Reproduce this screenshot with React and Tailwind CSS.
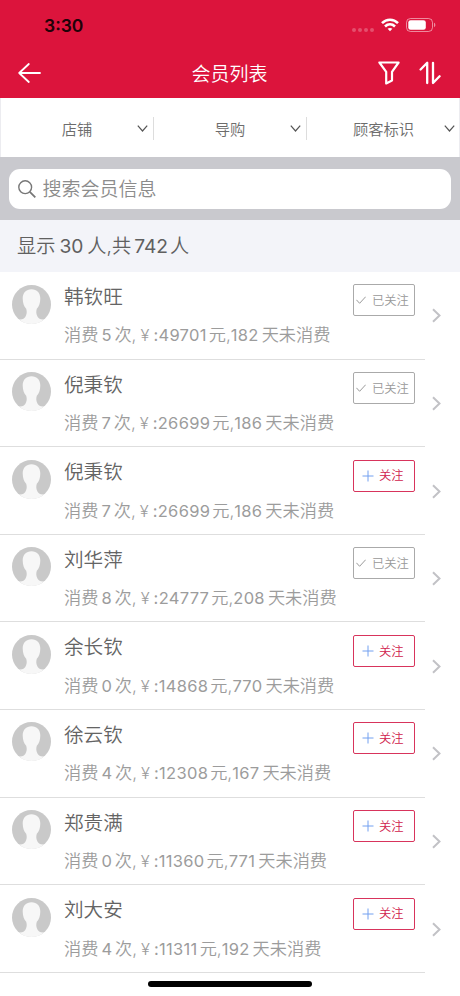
import { useState } from "react";
import clsx from "clsx";

const MEMBERS = [
    { id: 1, name: "韩钦旺", times: 5, amount: 49701, days: 182, followed: true },
    { id: 2, name: "倪秉钦", times: 7, amount: 26699, days: 186, followed: true },
    { id: 3, name: "倪秉钦", times: 7, amount: 26699, days: 186, followed: false },
    { id: 4, name: "刘华萍", times: 8, amount: 24777, days: 208, followed: true },
    { id: 5, name: "余长钦", times: 0, amount: 14868, days: 770, followed: false },
    { id: 6, name: "徐云钦", times: 4, amount: 12308, days: 167, followed: false },
    { id: 7, name: "郑贵满", times: 0, amount: 11360, days: 771, followed: false },
    { id: 8, name: "刘大安", times: 4, amount: 11311, days: 192, followed: false },
];

function StatusBar() {
    return (
        <div className="flex h-[50px] items-center justify-between pl-[44px] pr-[24px]">
            <span className="pt-px text-[17.5px] font-semibold leading-none text-[#200208]">3:30</span>
            <div className="flex items-center">
                <div className="mr-[7px] mt-[9px] flex gap-[2px]">
                    {[0, 1, 2, 3].map((i) => (
                        <i key={i} className="size-[4px] rounded-full bg-white/25" />
                    ))}
                </div>
                <svg className="mr-[7px] h-[14px] w-[18px]" viewBox="0 0 18 14" fill="none" stroke="#fff" strokeWidth="2.6">
                    <path d="M1 5.2C5.5.6 12.5.6 17 5.2" />
                    <path d="M4 8.5c2.9-2.8 7.1-2.8 10 0" />
                    <path d="M6.6 10.8C8 9.6 10 9.6 11.4 10.8L9 13.3z" fill="#fff" stroke="none" />
                </svg>
                <svg className="h-[14px] w-[30px]" viewBox="0 0 30 14">
                    <rect x=".5" y=".5" width="26" height="13" rx="4" fill="none" stroke="#fff" strokeOpacity=".5" />
                    <rect x="2.3" y="2.3" width="17.5" height="9.4" rx="2.3" fill="#fff" />
                    <path d="M28 4.8c1.8.6 1.8 3.8 0 4.4z" fill="#fff" fillOpacity=".5" />
                </svg>
            </div>
        </div>
    );
}

function NavBar() {
    return (
        <div className="grid h-[48px] grid-cols-3 items-center pb-[2px] pl-[18px] pr-[19px] text-white">
            <svg className="h-[20px] w-[23px]" viewBox="0 0 23 20" fill="none" stroke="#fff" strokeWidth="1.8" strokeLinecap="round" strokeLinejoin="round">
                <path d="M10.8 1 1.2 10l9.6 9M1.2 10H22" />
            </svg>
            <h1 className="pt-[2px] text-center text-[19px] leading-none">会员列表</h1>
            <div className="flex items-center justify-end gap-[19px]">
                <svg className="h-[24px] w-[22px]" viewBox="0 0 22 24" fill="none" stroke="#fff" strokeWidth="2.2" strokeLinejoin="round" strokeLinecap="round">
                    <path d="M1.4 1.5h19.2L14 10.8v8.8l-5.8 2.8V10.8z" />
                </svg>
                <svg className="h-[24px] w-[22px]" viewBox="0 0 22 24" fill="none" stroke="#fff" strokeWidth="2.3" strokeLinejoin="round" strokeLinecap="round">
                    <path d="M1.6 8.5 8.2 1.8V22M14 1.8V22l6.6-6.7" />
                </svg>
            </div>
        </div>
    );
}

function FilterTab({ label, divider }) {
    return (
        <button className={clsx("relative flex h-[23px] w-[153px] shrink-0 items-center justify-center text-[15.3px] text-[#6c6c6c]", divider && "border-r border-[#ddd]")}>
            <span className="pt-[3px]">{label}</span>
            <svg className="absolute right-[5px] top-[8px] h-[7px] w-[11px]" viewBox="0 0 11 7" fill="none" stroke="#555" strokeWidth="1.2">
                <path d="m.8.6 4.7 5.4 4.7-5.4" />
            </svg>
        </button>
    );
}

function Avatar() {
    return (
        <svg className="mt-[0.5px] size-[39px] shrink-0" viewBox="0 0 39 39">
            <circle cx="19.5" cy="19.5" r="19.5" fill="#c9c9c9" />
            <path d="M19.5 4.2c-5.4 0-8.8 3.7-8.8 9.2 0 4.8 1.5 8.2 3.5 10.4 1 3.5.3 4.7-.1 6.4-.8 3-3.5 4.5-7.1 4.2A19.5 19.5 0 0 0 32 34.4c-3.6.3-6.3-1.2-7.1-4.2-.4-1.7-1.1-2.9-.1-6.4 2-2.2 3.5-5.6 3.5-10.4 0-5.5-3.4-9.2-8.8-9.2z" fill="#f7f7f7" />
        </svg>
    );
}

function FollowButton({ followed, onClick }) {
    return (
        <button
            onClick={onClick}
            className={clsx(
                "flex h-[32px] w-[62px] items-center rounded-[2px] border text-[12.3px] leading-none",
                followed ? "border-[#aaa] pl-[2px] text-[#999]" : "border-[#d8345c] pl-[8px] text-[#d0214c]"
            )}
        >
            {followed ? (
                <svg className="mr-[6px] h-[8px] w-[10px] shrink-0" viewBox="0 0 10 8" fill="none" stroke="#999">
                    <path d="m.4 3.8 3.2 3.5L9.7.7" />
                </svg>
            ) : (
                <svg className="mr-[5px] size-[12px] shrink-0" viewBox="0 0 12 12" stroke="#72a0f0">
                    <path d="M6 .5v11M.5 6h11" />
                </svg>
            )}
            <span className="pt-[2px]">{followed ? "已关注" : "关注"}</span>
        </button>
    );
}

function MemberRow({ member, onToggle }) {
    return (
        <li className="flex h-[87.6px]">
            <div className="flex w-[425px] border-b border-[#dedede] pl-[12.4px] pt-[12px]">
                <Avatar />
                <div className="ml-[12.6px] flex flex-col">
                    <span className="text-[19.6px] leading-[26px] text-[#646464]">{member.name}</span>
                    <p className="mt-[12.4px] flex whitespace-nowrap text-[17.2px] leading-[26px] text-[#9c9c9c]">
                        <span>消费</span>
                        <span className="mx-[3px] text-[16.5px] font-normal">{member.times}</span>
                        <span>次,</span>
                        <span className="mx-[4px] text-[16.5px]">¥</span>
                        <span className="mr-[2px] text-[16.5px] font-normal tracking-[0.3px]">:{member.amount}</span>
                        <span>元,</span>
                        <span className="mr-[3px] text-[16.5px] font-normal tracking-[0.3px]">{member.days}</span>
                        <span>天未消费</span>
                    </p>
                </div>
            </div>
            <div className="-ml-[72px] pt-[12.4px]">
                <FollowButton followed={member.followed} onClick={onToggle} />
            </div>
            <svg className="ml-[17px] mt-[36.4px] h-[15px] w-[9px]" viewBox="0 0 9 15" fill="none" stroke="#c2c2c6" strokeWidth="2">
                <path d="m1 1.2 6.5 6.3L1 13.8" />
            </svg>
        </li>
    );
}

export default function App() {
    const [members, setMembers] = useState(MEMBERS);

    const toggleFollow = (id) => {
        setMembers((list) => list.map((m) => (m.id === id ? { ...m, followed: !m.followed } : m)));
    };

    return (
        <div className="flex h-[996px] w-[460px] flex-col overflow-hidden bg-white font-['Inter','Noto_Sans_CJK_SC',sans-serif] font-[350]">
            <header className="bg-[#dc143c]">
                <StatusBar />
                <NavBar />
            </header>

            {/* Filters */}
            <div className="flex h-[59px] items-center border-x border-[#ececf0] pt-[2px]">
                <FilterTab label="店铺" divider />
                <FilterTab label="导购" divider />
                <FilterTab label="顾客标识" />
            </div>

            {/* Search */}
            <div className="h-[63px] bg-[#c9c9ce] px-[9px] pt-[12px]">
                <label className="flex h-[40px] items-center rounded-[11px] bg-white pl-[9px]">
                    <svg className="mr-[6.5px] size-[18px] shrink-0" viewBox="0 0 18 18" fill="none" stroke="#777" strokeWidth="1.4">
                        <circle cx="7.2" cy="7.2" r="6.4" />
                        <path d="m11.8 11.8 5.5 5.5" strokeWidth="1.8" />
                    </svg>
                    <input
                        placeholder="搜索会员信息"
                        className="w-full pt-[2px] text-[19px] outline-none placeholder:text-[#8c8c8c]"
                    />
                </label>
            </div>

            <div className="flex h-[52px] items-center bg-[#f3f4f9] pl-[17px] pt-px text-[19.2px] text-[#606060]">
                <span>显示</span>
                <span className="mx-[4px] font-normal">30</span>
                <span>人,共</span>
                <span className="ml-[3px] mr-[2px] font-normal">742</span>
                <span>人</span>
            </div>

            {/* Members */}
            <ul>
                {members.map((m) => (
                    <MemberRow key={m.id} member={m} onToggle={() => toggleFollow(m.id)} />
                ))}
            </ul>

            <div className="mx-auto mt-[8px] h-[6px] w-[164px] shrink-0 rounded-full bg-black" />
        </div>
    );
}
